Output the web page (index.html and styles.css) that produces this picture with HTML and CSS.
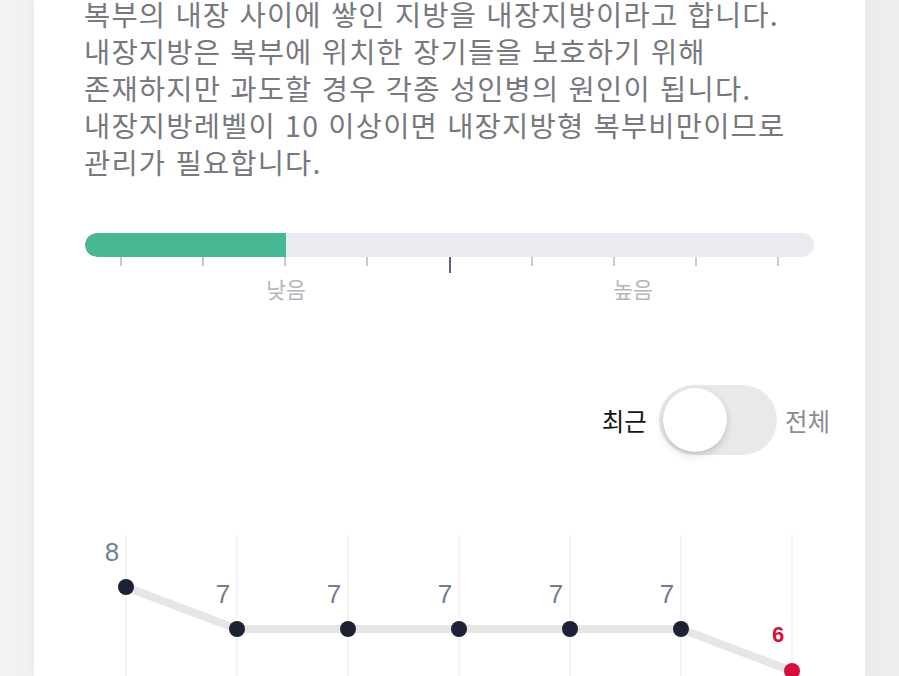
FILE: index.html
```html
<!DOCTYPE html>
<html lang="ko">
<head>
<meta charset="utf-8">
<title>내장지방</title>
<link rel="stylesheet" href="styles.css">
</head>
<body>
<main class="card">
  <p class="desc">복부의 내장 사이에 쌓인 지방을 내장지방이라고 합니다.<br>내장지방은 복부에 위치한 장기들을 보호하기 위해<br>존재하지만 과도할 경우 각종 성인병의 원인이 됩니다.<br>내장지방레벨이 10 이상이면 내장지방형 복부비만이므로<br>관리가 필요합니다.</p>

  <section class="level">
    <div class="track"><div class="fill" style="width:201px"></div></div>
    <div class="ticks">
      <span class="tick"></span><span class="tick"></span><span class="tick"></span><span class="tick"></span>
      <span class="tick major"></span>
      <span class="tick"></span><span class="tick"></span><span class="tick"></span><span class="tick"></span>
    </div>
    <div class="labels">
      <span class="lbl" style="left:201px">낮음</span>
      <span class="lbl" style="left:548px">높음</span>
    </div>
  </section>

  <div class="switch-row">
    <span class="opt active">최근</span>
    <span class="toggle"><span class="knob"></span></span>
    <span class="opt">전체</span>
  </div>

  <svg class="chart" width="831" height="146" viewBox="0 0 831 146">
    <g class="grid">
      <line x1="92" y1="5" x2="92" y2="146"/>
      <line x1="203" y1="5" x2="203" y2="146"/>
      <line x1="314" y1="5" x2="314" y2="146"/>
      <line x1="425" y1="5" x2="425" y2="146"/>
      <line x1="536" y1="5" x2="536" y2="146"/>
      <line x1="647" y1="5" x2="647" y2="146"/>
      <line x1="758" y1="5" x2="758" y2="146"/>
    </g>
    <polyline class="series" points="92,57 203,99 314,99 425,99 536,99 647,99 758,141"/>
    <g class="dots">
      <circle cx="92" cy="57" r="8"/>
      <circle cx="203" cy="99" r="8"/>
      <circle cx="314" cy="99" r="8"/>
      <circle cx="425" cy="99" r="8"/>
      <circle cx="536" cy="99" r="8"/>
      <circle cx="647" cy="99" r="8"/>
      <circle class="last" cx="758" cy="141" r="8"/>
    </g>
    <g class="vals">
      <text x="78" y="31">8</text>
      <text x="189" y="73">7</text>
      <text x="300" y="73">7</text>
      <text x="411" y="73">7</text>
      <text x="522" y="73">7</text>
      <text x="633" y="73">7</text>
      <text class="last" x="744" y="112">6</text>
    </g>
  </svg>
</main>
</body>
</html>
```
FILE: styles.css
```css
html, body {
  margin: 0;
  padding: 0;
}
body {
  width: 899px;
  height: 676px;
  overflow: hidden;
  background: linear-gradient(90deg, #f4f4f4 0%, #efefef 4%, #f0f0f0 50%, #ececec 96%, #eeeeee 100%);
  font-family: "Noto Sans CJK KR", "Noto Sans", sans-serif;
}
.card {
  margin: 0 34px;
  width: 831px;
  height: 676px;
  background: #ffffff;
  box-shadow: 0 0 10px rgba(0, 0, 0, 0.03);
  display: flex;
  flex-direction: column;
  box-sizing: border-box;
}
.desc {
  margin: -5px 0 0 50px;
  font-size: 28.5px;
  line-height: 37px;
  color: #78787f;
  letter-spacing: 1.2px;
  white-space: nowrap;
}
.level {
  margin: 53px 0 0 51px;
  width: 729px;
  position: relative;
}
.track {
  height: 24px;
  border-radius: 12px;
  background: #e9ebf0;
  overflow: hidden;
}
.fill {
  height: 100%;
  background: #48b894;
  border-radius: 12px 0 0 12px;
}
.ticks {
  display: flex;
  justify-content: space-between;
  padding: 0 35px;
  height: 17px;
  align-items: flex-start;
}
.tick {
  width: 2px;
  height: 9px;
  background: #c8cbd2;
}
.tick.major {
  height: 16px;
  background: #5b6376;
}
.labels {
  position: relative;
  height: 30px;
}
.lbl {
  position: absolute;
  top: 0;
  transform: translateX(-50%);
  font-size: 21.5px;
  line-height: 30px;
  color: #b3b6bd;
}
.switch-row {
  margin: 81px 35px 0 0;
  display: flex;
  justify-content: flex-end;
  align-items: center;
  gap: 12px;
}
.opt {
  font-size: 24.5px;
  color: #8d8d93;
}
.opt.active {
  color: #141414;
}
.toggle {
  width: 118px;
  height: 70px;
  border-radius: 35px;
  background: #e9e9eb;
  display: flex;
  align-items: center;
  padding-left: 4px;
  box-sizing: border-box;
  margin-right: -4px;
}
.knob {
  width: 64px;
  height: 64px;
  border-radius: 50%;
  background: #ffffff;
  box-shadow: 0 3px 8px rgba(0, 0, 0, 0.16), 0 1px 1px rgba(0, 0, 0, 0.08);
}
.chart {
  display: block;
  margin-top: 75px;
}
.grid line {
  stroke: #f0f0f3;
  stroke-width: 1.5;
}
.series {
  fill: none;
  stroke: #e6e6e6;
  stroke-width: 8;
}
.dots circle {
  fill: #1d2136;
}
.dots circle.last {
  fill: #d4103b;
}
.vals text {
  font-family: "Liberation Sans", Arial, sans-serif;
  font-size: 26px;
  fill: #6f7e91;
  text-anchor: middle;
}
.vals text.last {
  font-size: 22px;
  font-weight: bold;
  fill: #d4103b;
}
```
